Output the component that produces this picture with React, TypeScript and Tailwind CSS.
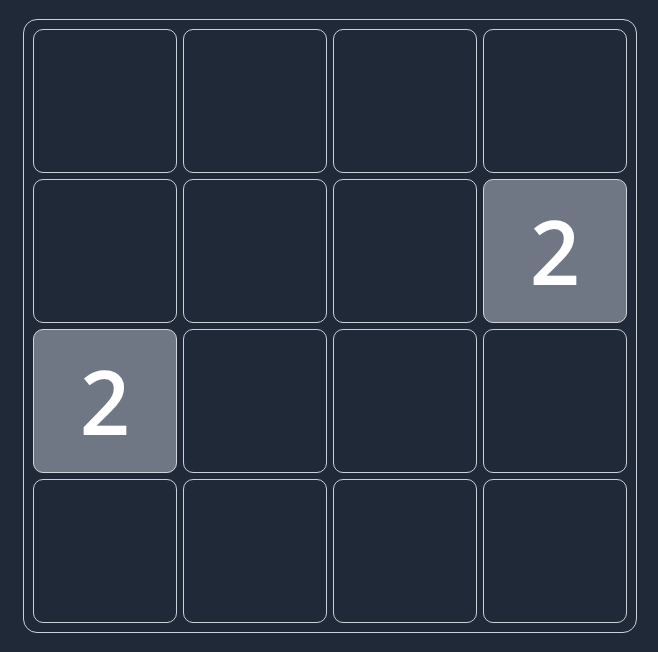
const board: number[][] = [
  [0, 0, 0, 0],
  [0, 0, 0, 2],
  [2, 0, 0, 0],
  [0, 0, 0, 0],
]

function Tile({ value }: { value: number }) {
  return (
    <div
      className={
        value
          ? 'flex h-[144px] w-[144px] items-center justify-center rounded-[10px] border border-[#d1d5db] bg-[#6f7684]'
          : 'h-[144px] w-[144px] rounded-[10px] border border-[#cbd1d9]'
      }
    >
      {value ? (
        <span className="font-['Open_Sans',sans-serif] text-[88px] font-semibold leading-none text-white">
          {value}
        </span>
      ) : null}
    </div>
  )
}

export default function App() {
  return (
    <div className="min-h-[652px] bg-[#1f2937] pl-[23px] pt-[19px]">
      <div className="grid w-[614px] grid-cols-4 gap-[6px] rounded-[14px] border border-[#cbd1d9] p-[9px]">
        {board.flat().map((v, i) => (
          <Tile key={i} value={v} />
        ))}
      </div>
    </div>
  )
}
